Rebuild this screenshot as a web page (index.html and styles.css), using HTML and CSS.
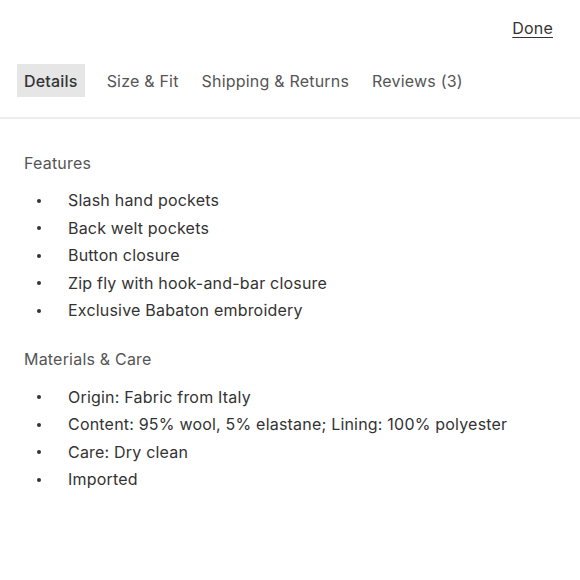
FILE: index.html
```html
<!DOCTYPE html>
<html>
<head>
<meta charset="utf-8">
<link rel="stylesheet" href="styles.css">
</head>
<body>
<div class="panel">
  <div class="topbar"><a class="done" href="#">Done</a></div>
  <nav class="tabs">
    <span class="tab active">Details</span>
    <span class="tab">Size &amp; Fit</span>
    <span class="tab">Shipping &amp; Returns</span>
    <span class="tab">Reviews (3)</span>
  </nav>
  <div class="content">
    <h3 class="heading">Features</h3>
    <ul class="list">
      <li>Slash hand pockets</li>
      <li>Back welt pockets</li>
      <li>Button closure</li>
      <li>Zip fly with hook-and-bar closure</li>
      <li>Exclusive Babaton embroidery</li>
    </ul>
    <h3 class="heading second">Materials &amp; Care</h3>
    <ul class="list">
      <li>Origin: Fabric from Italy</li>
      <li>Content: 95% wool, 5% elastane; Lining: 100% polyester</li>
      <li>Care: Dry clean</li>
      <li>Imported</li>
    </ul>
  </div>
</div>
</body>
</html>
```
FILE: styles.css
```css
* { box-sizing: border-box; }
html, body { margin: 0; padding: 0; background: #fff; }
body {
  font-family: "Inter", "Liberation Sans", sans-serif;
  font-size: 16px;
  letter-spacing: 0.2px;
  color: #333;
}
.topbar {
  display: flex;
  justify-content: flex-end;
  padding: 18px 27px 0 0;
  height: 64px;
}
.done {
  color: #333;
  text-decoration: underline;
  text-underline-offset: 3px;
  line-height: 20px;
}
.tabs {
  display: flex;
  align-items: center;
  gap: 9px;
  padding: 0 0 20px 17px;
  border-bottom: 2px solid #ececec;
}
.tab {
  padding: 1px 7px 0;
  height: 33px;
  line-height: 33px;
  color: #555;
}
.tab.active {
  background: #e6e6e6;
  color: #333;
  font-weight: 500;
  margin-right: 6px;
}
.content {
  padding: 34px 24px 0 24px;
}
.heading {
  margin: 0;
  font-size: 16px;
  font-weight: normal;
  line-height: 20px;
  color: #555;
}
.heading.second { margin-top: 24px; }
.list {
  margin: 14px 0 0 0;
  padding: 0;
  list-style: none;
}
.heading.second + .list { margin-top: 15px; }
.list li {
  display: flex;
  align-items: center;
  line-height: 27.5px;
  color: #333;
}
.list li::before {
  content: "";
  width: 4px;
  height: 4px;
  border-radius: 50%;
  background: #333;
  margin: 0 27px 0 13px;
  flex: none;
}
```
